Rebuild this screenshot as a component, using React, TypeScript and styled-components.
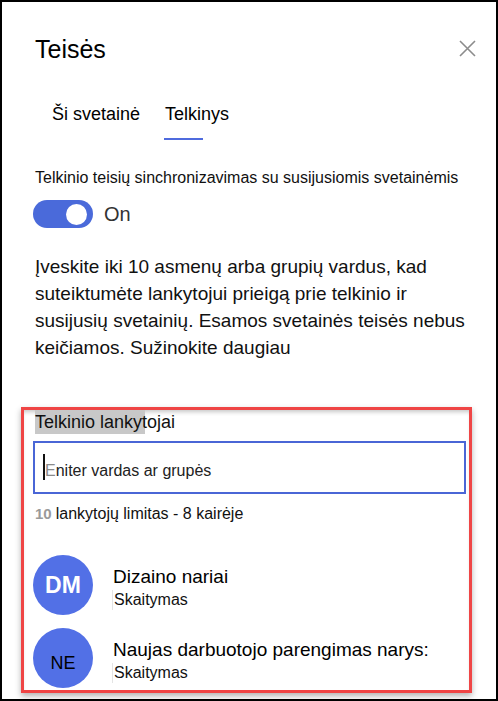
import React from 'react'
import styled, { createGlobalStyle } from 'styled-components'

const GlobalStyle = createGlobalStyle`
  html, body {
    margin: 0;
    padding: 0;
    background: #fff;
  }
  body {
    font-family: 'Liberation Sans', Arial, sans-serif;
    color: #111;
  }
`

const Frame = styled.div`
  box-sizing: border-box;
  width: 498px;
  height: 701px;
  border: 2px solid #000;
  padding: 31px 20px 0 33px;
  overflow: hidden;
`

const Header = styled.div`
  display: flex;
  justify-content: space-between;
  align-items: flex-start;
`

const Title = styled.h1`
  margin: 0;
  font-size: 25px;
  line-height: 32px;
  font-weight: 400;
  color: #000;
`

const CloseButton = styled.button`
  border: 0;
  background: none;
  padding: 0;
  margin-top: 7px;
  width: 17px;
  height: 17px;
  display: flex;
  cursor: pointer;
`

const TabList = styled.div`
  display: flex;
  gap: 25px;
  margin: 37px 0 0 17px;
`

const Tab = styled.div<{ active?: boolean }>`
  position: relative;
  font-size: 18px;
  line-height: 24px;
  padding-bottom: 14px;
  color: #000;
  &::after {
    content: '';
    position: absolute;
    left: -1px;
    bottom: 0;
    width: 39px;
    height: 2px;
    background: ${props => (props.active ? '#4f6bde' : 'transparent')};
  }
`

const SyncLabel = styled.div`
  margin-top: 28px;
  font-size: 16px;
  line-height: 20px;
  color: #111;
`

const ToggleRow = styled.div`
  display: flex;
  align-items: center;
  gap: 11px;
  margin: 12px 0 0 -2px;
`

const ToggleTrack = styled.div<{ on: boolean }>`
  width: 60px;
  height: 28px;
  border-radius: 14px;
  background: ${props => (props.on ? '#4a6ada' : '#ccc')};
  display: flex;
  align-items: center;
  justify-content: ${props => (props.on ? 'flex-end' : 'flex-start')};
  padding: 0 6px;
  box-sizing: border-box;
`

const ToggleKnob = styled.div`
  width: 21px;
  height: 21px;
  border-radius: 50%;
  background: #fff;
`

const ToggleText = styled.span`
  font-size: 20px;
  color: #333;
`

const Description = styled.p`
  margin: 25px 0 0;
  font-size: 19px;
  line-height: 27px;
  color: #111;
`

const Section = styled.section`
  margin: 46px 4px 0 -14px;
  border: 3px solid #ef4545;
  padding: 0 3px 2px 9px;
  box-shadow: 0 3px 6px rgba(0, 0, 0, 0.3), inset 0 4px 4px -2px rgba(0, 0, 0, 0.22);
`

const FieldLabel = styled.div`
  margin-left: 2px;
  font-size: 18px;
  line-height: 24px;
  color: #111;
  background: linear-gradient(to right, #c8c8c8 110px, transparent 110px);
`

const InputBox = styled.div`
  margin-top: 7px;
  height: 53px;
  box-sizing: border-box;
  border: 2px solid #4a66d6;
  padding: 11px 10px 0 8px;
  display: flex;
  align-items: flex-start;
`

const Caret = styled.span`
  width: 2px;
  height: 26px;
  background: #111;
  flex: none;
`

const Placeholder = styled.span`
  margin-top: 7px;
  font-size: 16px;
  line-height: 20px;
  color: #222;
`

const Faint = styled.span`
  color: #8a8a8a;
`

const Limit = styled.div`
  margin: 10px 0 0 2px;
  font-size: 16px;
  line-height: 20px;
  color: #111;
`

const LimitCount = styled.b`
  color: #9a9a9a;
  margin-right: 4px;
  font-size: 15px;
`

const MemberList = styled.div`
  display: flex;
  flex-direction: column;
  gap: 13px;
  margin-top: 31px;
`

const Member = styled.div`
  display: flex;
  align-items: flex-start;
  gap: 20px;
`

const Avatar = styled.div<{ bold?: boolean }>`
  width: 60px;
  height: 60px;
  border-radius: 50%;
  background: #5270e6;
  flex: none;
  display: flex;
  align-items: center;
  justify-content: center;
  font-size: ${props => (props.bold ? '23px' : '18px')};
  font-weight: ${props => (props.bold ? 700 : 400)};
  color: ${props => (props.bold ? '#fff' : '#000')};
  padding-top: ${props => (props.bold ? '0' : '10px')};
  box-sizing: border-box;
`

const MemberInfo = styled.div`
  padding-top: 10px;
`

const MemberName = styled.div`
  font-size: 19px;
  line-height: 24px;
  color: #000;
`

const MemberRole = styled.div`
  margin: 1px 0 0 -1px;
  padding-left: 1px;
  border-left: 1px solid #e4e4e4;
  font-size: 16px;
  line-height: 20px;
  color: #111;
`

const members = [
  { initials: 'DM', name: 'Dizaino nariai', role: 'Skaitymas', bold: true },
  { initials: 'NE', name: 'Naujas darbuotojo parengimas narys:', role: 'Skaitymas', bold: false }
]

const App = () => {
  return (
    <>
      <GlobalStyle />
      <Frame>
        <Header>
          <Title>Teisės</Title>
          <CloseButton aria-label='Uždaryti'>
            <svg width='17' height='17' viewBox='0 0 17 17'>
              <path d='M1 1L16 16M16 1L1 16' stroke='#8c8c8c' strokeWidth='1.6' fill='none' />
            </svg>
          </CloseButton>
        </Header>
        <TabList>
          <Tab>Ši svetainė</Tab>
          <Tab active>Telkinys</Tab>
        </TabList>
        <SyncLabel>Telkinio teisių sinchronizavimas su susijusiomis svetainėmis</SyncLabel>
        <ToggleRow>
          <ToggleTrack on>
            <ToggleKnob />
          </ToggleTrack>
          <ToggleText>On</ToggleText>
        </ToggleRow>
        <Description>
          Įveskite iki 10 asmenų arba grupių vardus, kad suteiktumėte lankytojui prieigą prie
          telkinio ir susijusių svetainių. Esamos svetainės teisės nebus keičiamos. Sužinokite
          daugiau
        </Description>
        <Section>
          <FieldLabel>Telkinio lankytojai</FieldLabel>
          <InputBox>
            <Caret />
            <Placeholder>
              <Faint>E</Faint>niter vardas ar grupės
            </Placeholder>
          </InputBox>
          <Limit>
            <LimitCount>10</LimitCount>lankytojų limitas - 8 kairėje
          </Limit>
          <MemberList>
            {members.map(m => (
              <Member key={m.initials}>
                <Avatar bold={m.bold}>{m.initials}</Avatar>
                <MemberInfo>
                  <MemberName>{m.name}</MemberName>
                  <MemberRole>{m.role}</MemberRole>
                </MemberInfo>
              </Member>
            ))}
          </MemberList>
        </Section>
      </Frame>
    </>
  )
}

export default App
